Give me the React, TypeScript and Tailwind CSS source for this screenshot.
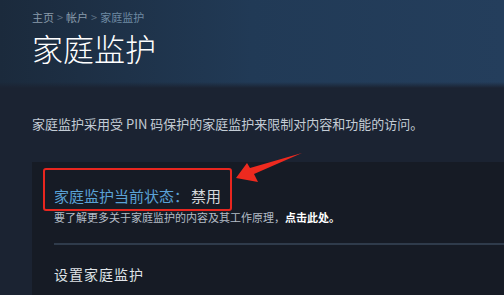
import React from "react";

const cjk = { fontFamily: '"Noto Sans CJK SC", "Noto Sans", sans-serif' };

export default function App() {
  return (
    <div className="relative w-[504px] h-[295px] overflow-hidden bg-[#1b2332]" style={cjk}>
      <div className="h-[88px] bg-gradient-to-r from-[#1b2a3c] via-[#213a56] to-[#243e5c] px-[32px] pt-[9px] relative">
        <div className="flex items-center gap-[3px] text-[11px] leading-[16px] text-[#8a9bab]">
          <span>主页</span>
          <span className="text-[#5c6f82]">&gt;</span>
          <span>帐户</span>
          <span className="text-[#5c6f82]">&gt;</span>
          <span className="text-[#6f8aa3]">家庭监护</span>
        </div>
        <div className="text-[31px] leading-[40px] mt-[3px] text-white font-light">家庭监护</div>
        <div className="absolute left-0 right-0 bottom-0 h-[6px] bg-gradient-to-b from-transparent to-[#1b2332]" />
      </div>
      <div className="px-[32px] pt-[27px] text-[13px] leading-[18px] text-[#c3ccd5]">
        家庭监护采用受 PIN 码保护的家庭监护来限制对内容和功能的访问。
      </div>
      <div className="ml-[32px] mt-[29px] bg-[#161b25] h-[140px] pl-[22px] pt-[24px]">
        <div className="text-[15px] leading-[20px] flex">
          <span className="text-[#5aa2d6]">家庭监护当前状态：</span>
          <span className="text-[#d4d8dc] ml-[2px]">禁用</span>
        </div>
        <div className="mt-[4px] text-[11px] leading-[14px] text-[#b3bcc5]">
          要了解更多关于家庭监护的内容及其工作原理，<span className="text-white font-bold">点击此处。</span>
        </div>
        <div className="mt-[19px] h-[2px] bg-[#2f3b4b]" />
        <div className="mt-[20px] text-[14px] leading-[18px] text-[#dfe3e7] tracking-[1px]">设置家庭监护</div>
      </div>
      <div className="absolute left-[43px] top-[168px] w-[189px] h-[43px] border-2 border-[#e8261f] rounded-[3px]" />
      <svg className="absolute left-0 top-0" width="504" height="295" viewBox="0 0 504 295">
        <polygon points="236,178 247,163 250,168 302,153 254,174 258,182" fill="#ee2a1f" />
      </svg>
    </div>
  );
}
